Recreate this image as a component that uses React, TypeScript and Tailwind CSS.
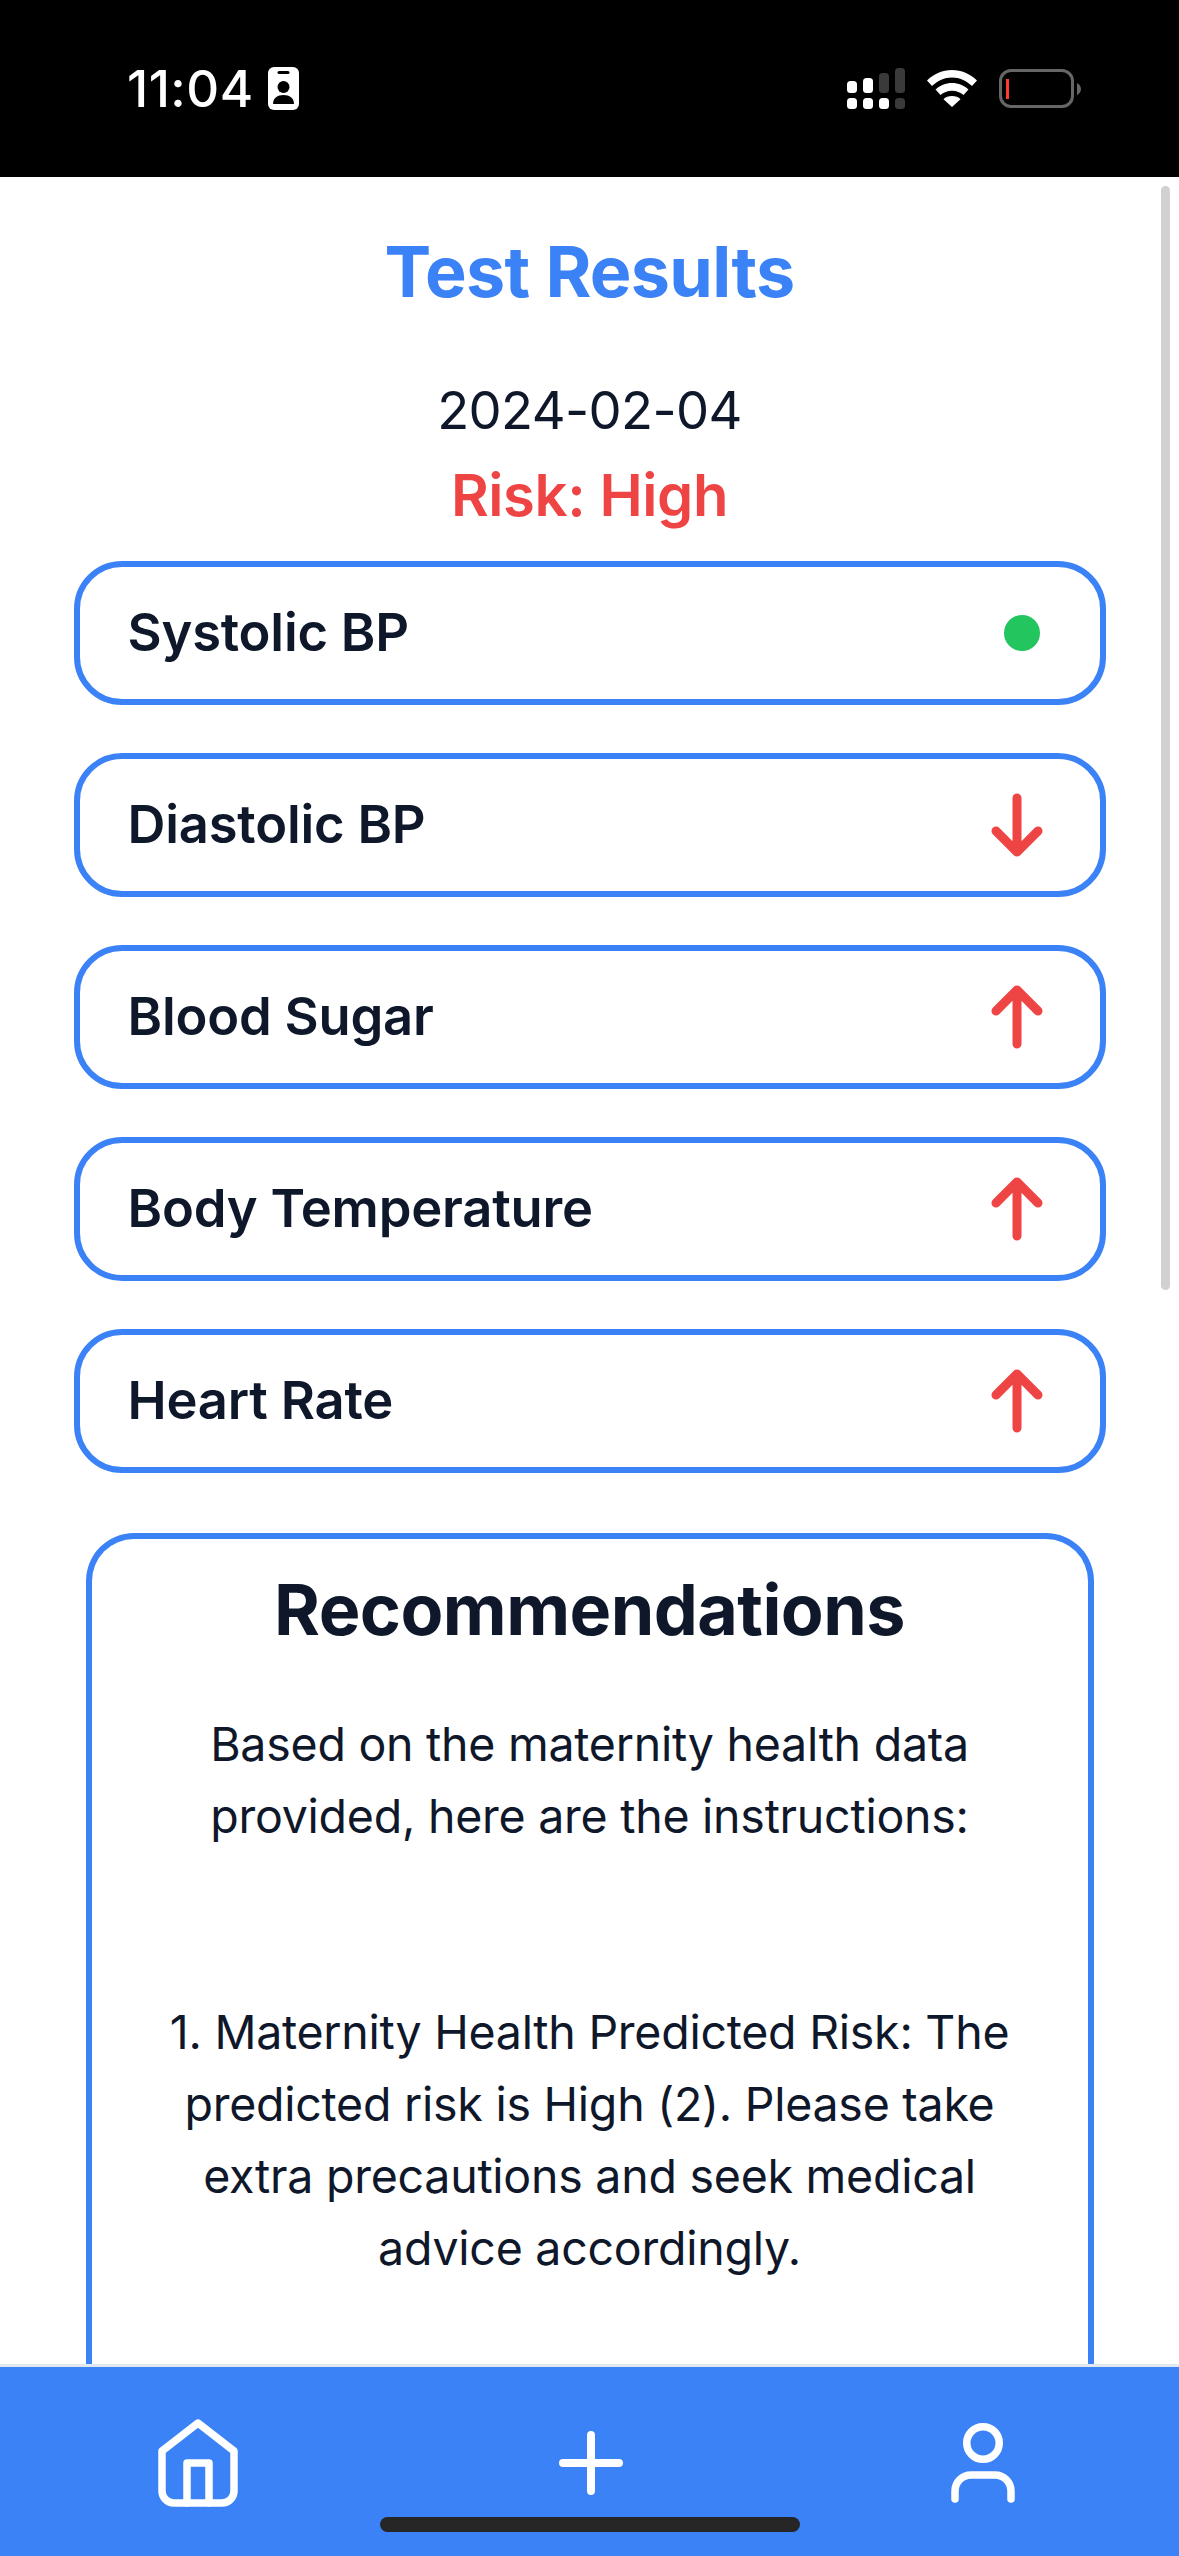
const rows = [
  { name: "Systolic BP", status: "ok" },
  { name: "Diastolic BP", status: "down" },
  { name: "Blood Sugar", status: "up" },
  { name: "Body Temperature", status: "up" },
  { name: "Heart Rate", status: "up" },
];

function StatusBar() {
  return (
    <div className="h-[177px] shrink-0 bg-black flex items-center justify-between pl-[127px] pr-[98px] text-white">
      <div className="flex items-center gap-[14px]">
        <span className="text-[51px] font-medium leading-none tracking-[0.5px]">11:04</span>
        <svg width="31" height="43" viewBox="0 0 31 43">
          <rect width="31" height="43" rx="6" fill="#fff" />
          <rect x="9.500" y="4" width="12" height="3" rx="1.500" fill="#000" />
          <circle cx="15.500" cy="20" r="6" fill="#000" />
          <path d="M5 37c0-6 4.500-9 10.500-9s10.500 3 10.500 9z" fill="#000" />
        </svg>
      </div>
      <div className="flex items-center gap-[22px]">
        <svg width="58" height="41" viewBox="0 0 58 41">
          <rect x="0" y="13" width="10" height="12" rx="3.500" fill="#fff" />
          <rect x="16" y="10" width="10" height="15" rx="3.500" fill="#fff" />
          <rect x="32" y="5" width="10" height="20" rx="3.500" fill="#3a3a3a" />
          <rect x="48" y="0" width="10" height="25" rx="3.500" fill="#3a3a3a" />
          <rect x="0" y="30" width="10" height="11" rx="3.500" fill="#fff" />
          <rect x="16" y="30" width="10" height="11" rx="3.500" fill="#fff" />
          <rect x="32" y="30" width="10" height="11" rx="3.500" fill="#fff" />
          <rect x="48" y="30" width="10" height="11" rx="3.500" fill="#3a3a3a" />
        </svg>
        <svg width="50" height="37" viewBox="0 0 50 37">
          <path d="M25 0C15.500 0 7 3.800 0 10.500l5 5.500C10.500 10.800 17.500 7.500 25 7.500s14.500 3.300 20 8.500l5-5.500C43 3.800 34.500 0 25 0z" fill="#fff" />
          <path d="M25 13c-6.500 0-12 2.500-16.500 6.500l5 5.500c3-2.700 7-4.300 11.500-4.300s8.500 1.600 11.500 4.300l5-5.500C37 15.500 31.500 13 25 13z" fill="#fff" />
          <path d="M25 26c-3.500 0-6.500 1.200-8.500 3.200L25 37l8.500-7.800C31.500 27.200 28.500 26 25 26z" fill="#fff" />
        </svg>
        <div className="flex items-center gap-[3px]">
          <div className="w-[75px] h-[39px] rounded-[12px] border-[3px] border-[#666666] flex items-center pl-[4px]">
            <div className="w-[3px] h-[20px] bg-[#ff3b30]" />
          </div>
          <svg width="4" height="12" viewBox="0 0 4 12">
            <path d="M0 0c2 1 4 3 4 6s-2 5-4 6z" fill="#666666" />
          </svg>
        </div>
      </div>
    </div>
  );
}

function Arrow({ up }: { up?: boolean }) {
  return (
    <svg width="60" height="72" viewBox="0 0 60 72" fill="none" stroke="#ef4444" strokeWidth="9" strokeLinecap="round" strokeLinejoin="round">
      <path d={up ? "M30 63V9M9 30l21-21 21 21" : "M30 9v54M9 42l21 21 21-21"} />
    </svg>
  );
}

function MetricRow({ name, status }: { name: string; status: string }) {
  return (
    <div className="h-[144px] rounded-[48px] border-[6px] border-[#3b82f6] flex items-center justify-between pl-[48px] pr-[53px]">
      <span className="mb-[2px] text-[52.5px] font-semibold tracking-[-0.2px] text-[#0f172a]">{name}</span>
      {status === "ok" && <div className="w-9 h-9 mr-[7px] rounded-full bg-[#22c55e]" />}
      {status === "down" && <Arrow />}
      {status === "up" && <Arrow up />}
    </div>
  );
}

function HomeIcon() {
  return (
    <svg className="mr-[3px]" width="80" height="88" viewBox="0 0 80 88" fill="none" stroke="#fff" strokeWidth="7.500" strokeLinecap="round" strokeLinejoin="round">
      <path d="M40 4L4 32V72a12 12 0 0 0 12 12H64a12 12 0 0 0 12-12V32z" />
      <path d="M29 84V44H51V84" />
    </svg>
  );
}

function PlusIcon() {
  return (
    <svg width="64" height="64" viewBox="0 0 64 64" fill="none" stroke="#fff" strokeWidth="8" strokeLinecap="round">
      <path d="M32 4V60M4 32H60" />
    </svg>
  );
}

function UserIcon() {
  return (
    <svg width="64" height="80" viewBox="0 0 64 80" fill="none" stroke="#fff" strokeWidth="7.500" strokeLinecap="round">
      <circle cx="32" cy="20" r="16.250" />
      <path d="M4 76V68a16 16 0 0 1 16-16H44a16 16 0 0 1 16 16V76" />
    </svg>
  );
}

export default function App() {
  return (
    <div
      className="h-[2556px] w-[1179px] flex flex-col overflow-hidden bg-white relative"
      style={{ fontFamily: "Inter, sans-serif" }}
    >
      <StatusBar />
      <main className="flex-1 overflow-hidden relative flex flex-col items-center pt-[59px]">
        <h1 className="text-[70px] leading-[72px] font-bold tracking-[-0.7px] text-[#3b82f6]">Test Results</h1>
        <p className="mt-[66px] text-[52.5px] leading-[72px] tracking-[-0.6px] text-[#0f172a]">2024-02-04</p>
        <p className="mt-[13px] text-[58px] leading-[72px] font-semibold tracking-[-0.4px] text-[#ef4444]">Risk: High</p>
        <div className="mt-[30px] w-[1032px] flex flex-col gap-[48px]">
          {rows.map((r) => (
            <MetricRow key={r.name} name={r.name} status={r.status} />
          ))}
        </div>
        <section className="mt-[60px] w-[1008px] shrink-0 rounded-t-[48px] border-[6px] border-b-0 border-[#3b82f6] px-[60px] pt-[35px] text-center text-[#0f172a]">
          <h2 className="text-[70px] leading-[72px] font-bold tracking-[-0.55px]">Recommendations</h2>
          <p className="mt-[62px] text-[46.5px] leading-[72px] tracking-[-0.25px]">
            Based on the maternity health data provided, here are the instructions:
          </p>
          <p className="mt-[144px] text-[46.5px] leading-[72px] tracking-[-0.25px]">
            1. Maternity Health Predicted Risk: The predicted risk is High (2). Please take extra precautions and seek medical advice accordingly.
          </p>
          <div className="h-[400px]" />
        </section>
        {/* scrollbar */}
        <div className="absolute right-[9px] top-[9px] w-[9px] h-[1104px] rounded-full bg-[#d1d1d1]" />
      </main>
      <nav className="h-[192px] shrink-0 border-t-[3px] border-[#e2e8f0] bg-[#3b82f6] relative grid grid-cols-3 items-center justify-items-center pl-[3px] pt-[3px]">
        <HomeIcon />
        <PlusIcon />
        <UserIcon />
        <div className="absolute left-[380px] bottom-[24px] w-[420px] h-[15px] rounded-full bg-[#262626]" />
      </nav>
    </div>
  );
}
